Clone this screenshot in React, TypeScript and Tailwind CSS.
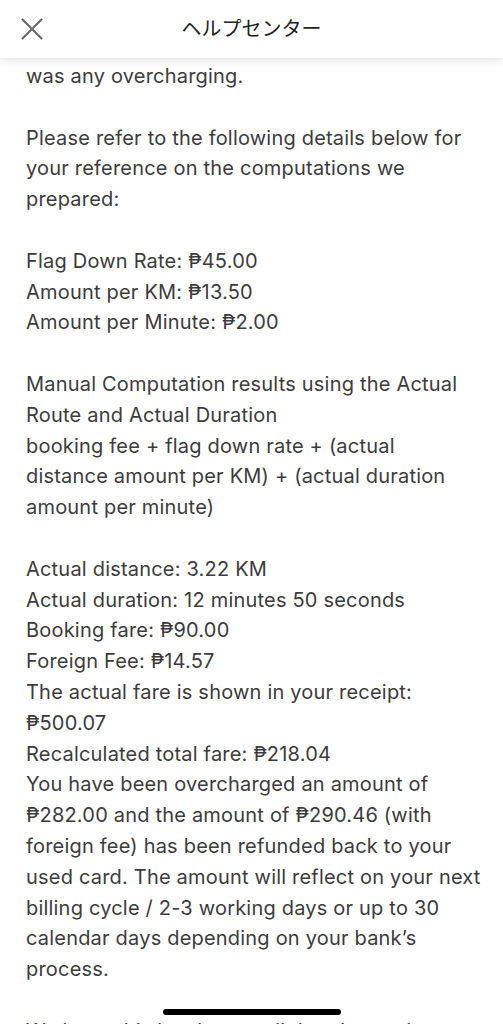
const blocks: string[][] = [
  ["was any overcharging."],
  [
    "Please refer to the following details below for",
    "your reference on the computations we",
    "prepared:",
  ],
  [
    "Flag Down Rate: ₱45.00",
    "Amount per KM: ₱13.50",
    "Amount per Minute: ₱2.00",
  ],
  [
    "Manual Computation results using the Actual",
    "Route and Actual Duration",
    "booking fee + flag down rate + (actual",
    "distance amount per KM) + (actual duration",
    "amount per minute)",
  ],
  [
    "Actual distance: 3.22 KM",
    "Actual duration: 12 minutes 50 seconds",
    "Booking fare: ₱90.00",
    "Foreign Fee: ₱14.57",
    "The actual fare is shown in your receipt:",
    "₱500.07",
    "Recalculated total fare: ₱218.04",
    "You have been overcharged an amount of",
    "₱282.00 and the amount of ₱290.46 (with",
    "foreign fee) has been refunded back to your",
    "used card. The amount will reflect on your next",
    "billing cycle / 2-3 working days or up to 30",
    "calendar days depending on your bank’s",
    "process.",
  ],
  ["We hope this has been enlightening and we are sorry to"],
];

export default function App() {
  return (
    <div className="relative h-[1024px] w-[503px] overflow-hidden bg-white font-['Inter','Noto_Sans_CJK_JP',sans-serif]">
      <header className="relative z-10 flex h-[58px] items-center bg-white shadow-[0_2px_10px_rgba(0,0,0,0.12)]">
        <button className="ml-[21px] flex h-[22px] w-[22px] items-center justify-center text-[#666]">
          <svg width="22" height="22" viewBox="0 0 22 22" fill="none" stroke="currentColor" strokeWidth="2" strokeLinecap="round">
            <path d="M1.5 1.5 20.5 20.5M20.5 1.5 1.5 20.5" />
          </svg>
        </button>
        <h1 className="absolute left-1/2 -translate-x-1/2 text-[20px] text-[#222]">
          ヘルプセンター
        </h1>
      </header>

      <main className="px-[26px] pt-[3px] text-[20px] leading-[30.8px] tracking-[0.2px] text-[#3c3c3c]">
        {blocks.map((lines, i) => (
          <p key={i} className="mb-[30.8px] whitespace-nowrap">
            {lines.map((l, j) => (
              <span key={j} className="block">
                {l}
              </span>
            ))}
          </p>
        ))}
      </main>

      <div className="absolute bottom-[9px] left-[163px] h-[6px] w-[178px] rounded-full bg-black" />
    </div>
  );
}
